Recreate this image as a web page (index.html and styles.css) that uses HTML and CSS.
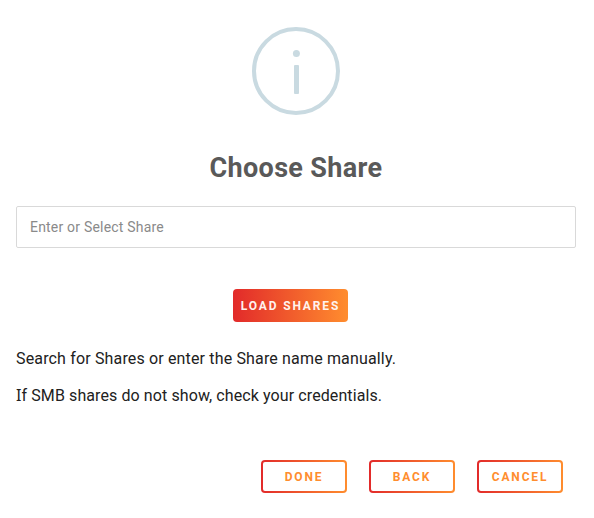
FILE: index.html
```html
<!DOCTYPE html>
<html lang="en">
<head>
<meta charset="utf-8">
<title>Choose Share</title>
<link rel="stylesheet" href="styles.css">
</head>
<body>
<main class="dialog">
  <svg class="info-icon" viewBox="0 0 88 88" aria-hidden="true">
    <circle class="info-ring" cx="44" cy="44" r="42"/>
    <circle cx="44.4" cy="26.4" r="3.5"/>
    <rect x="42" y="38" width="5" height="29" rx="1"/>
  </svg>
  <h1 class="title">Choose Share</h1>
  <input class="share-input" type="text" placeholder="Enter or Select Share">
  <button class="load-button">LOAD SHARES</button>
  <div class="help">
    <p class="line-search">Search for Shares or enter the Share name manually.</p>
    <p class="line-smb"><span class="serif-i">I</span>f SMB shares do not show, check your credentials.</p>
  </div>
  <div class="actions">
    <button class="action">DONE</button>
    <button class="action">BACK</button>
    <button class="action">CANCEL</button>
  </div>
</main>
</body>
</html>
```

FILE: styles.css
```css
* { box-sizing: border-box; }
body {
  margin: 0;
  background: #fff;
  color: #212121;
  font-family: Roboto, "Liberation Sans", sans-serif;
}
.dialog {
  display: flex;
  flex-direction: column;
  width: 592px;
  padding: 27px 16px 0;
}
.info-icon {
  width: 88px;
  height: 88px;
  align-self: center;
  fill: #c9dae1;
}
.info-ring { fill: none; stroke: #c9dae1; stroke-width: 4; }
.title {
  margin: 37px 0 0;
  height: 32px;
  line-height: 32px;
  text-align: center;
  color: #595959;
  font-size: 27px;
  font-weight: 700;
  letter-spacing: 0.35px;
}
.share-input {
  width: 560px;
  height: 42px;
  margin-top: 22px;
  padding: 0 13px;
  border: 1px solid #d9d9d9;
  border-radius: 2px;
  font: 14px Roboto, sans-serif;
  letter-spacing: 0.2px;
  outline: none;
}
.share-input::placeholder { color: #8a8a8a; opacity: 1; }
button {
  padding: 0;
  border: 0;
  border-radius: 4px;
  font: 700 12px Roboto, sans-serif;
  letter-spacing: 1.85px;
  white-space: nowrap;
}
.load-button {
  width: 115px;
  height: 33px;
  margin: 41px 0 0 217px;
  color: #fff3ee;
  background: linear-gradient(to right, #e22a2a, #ff8d2e);
}
.help { margin-top: 18px; font-size: 16px; }
.help p { margin: 0; height: 37px; line-height: 37px; white-space: nowrap; }
.line-search { letter-spacing: 0.155px; }
.line-smb { letter-spacing: 0.095px; }
.serif-i { font-family: "Noto Sans", sans-serif; }
.actions {
  display: flex;
  gap: 22px;
  margin: 46px 0 0 245px;
}
.action {
  width: 86px;
  height: 33px;
  color: #ff8d2e;
  border: 2px solid transparent;
  background:
    linear-gradient(#fff, #fff) padding-box,
    linear-gradient(to right, #e22a2a, #ff8d2e) border-box;
}
```
